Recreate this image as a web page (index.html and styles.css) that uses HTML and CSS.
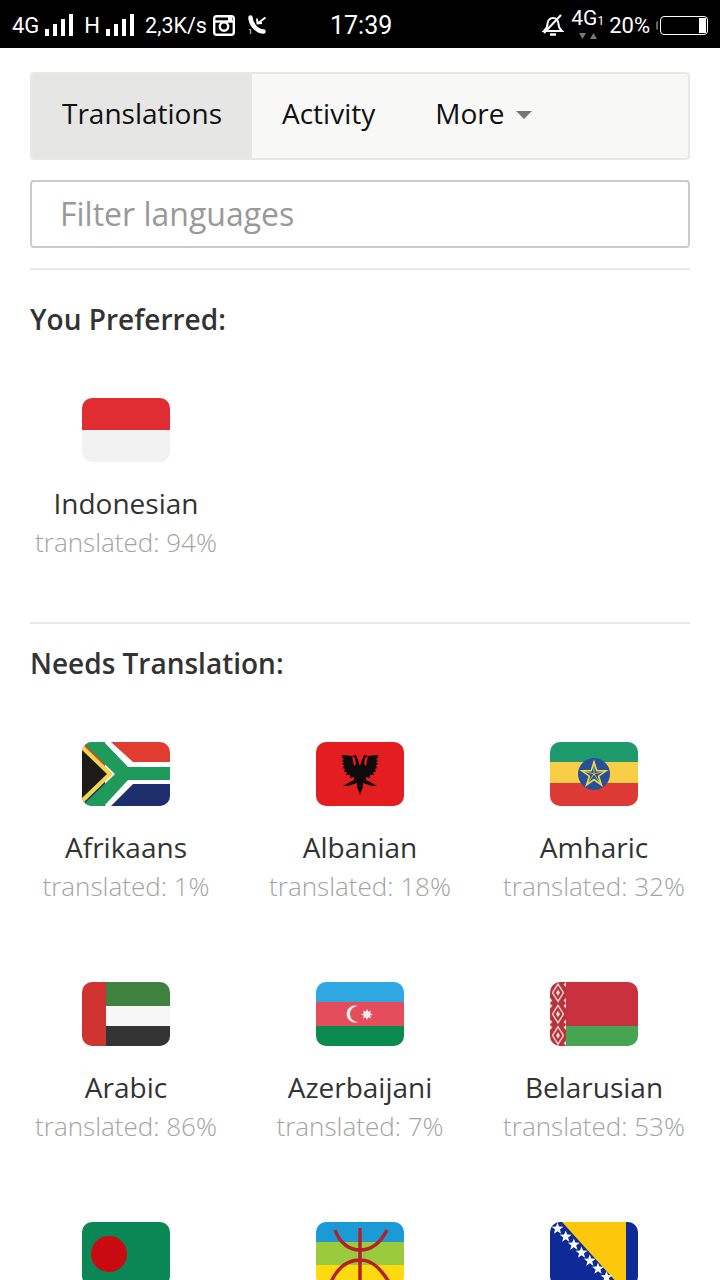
FILE: index.html
```html
<!DOCTYPE html>
<html lang="en">
<head>
    <meta charset="UTF-8">
    <meta name="viewport" content="width=device-width, initial-scale=1.0">
    <title>Translations</title>
    <link rel="stylesheet" href="styles.css">
</head>
<body>
    <header class="statusbar">
        <div class="status-left">
            <span class="net">4G</span>
            <svg class="bars" width="28" height="22" viewBox="0 0 28 22"><path d="M0 15h4v7H0zM8 10h4v12H8zM16 5h4v17h-4zM24 0h4v22h-4z" fill="#fff"/></svg>
            <span class="net net-h">H</span>
            <svg class="bars bars-h" width="28" height="22" viewBox="0 0 28 22"><path d="M0 15h4v7H0zM8 10h4v12H8zM16 5h4v17h-4zM24 0h4v22h-4z" fill="#fff"/></svg>
            <span class="speed">2,3K/s</span>
            <svg class="insta" width="22" height="21" viewBox="0 0 22 21"><rect x="1.200" y="1.200" width="19.600" height="18.600" rx="2.500" fill="none" stroke="#fff" stroke-width="2.400"/><path d="M1 6.500h20" stroke="#fff" stroke-width="2.400"/><circle cx="11" cy="11.500" r="4.200" fill="#000" stroke="#fff" stroke-width="2.400"/><rect x="15" y="2" width="4" height="4" fill="#fff"/></svg>
            <div class="call">
                <svg width="20" height="20" viewBox="0 0 20 20"><path d="M3.500 2.500C3.500 9 10 16.500 16.500 16.500" fill="none" stroke="#fff" stroke-width="4.500" stroke-linecap="round"/><path d="M10.500 8.500L18.500 2.500M10 3.500l.5 5 4.500-.5" fill="none" stroke="#fff" stroke-width="2"/></svg>
                <span class="call-sim">1</span>
            </div>
        </div>
        <div class="clock">17:39</div>
        <div class="status-right">
            <svg class="bell" width="22" height="22" viewBox="0 0 22 22"><path d="M2 17c2.500-2 3.500-4 3.500-7 0-3.500 2.500-6 5.500-6s5.500 2.500 5.500 6c0 3 1 5 3.500 7z" fill="none" stroke="#fff" stroke-width="2"/><path d="M8 20.500h6" stroke="#fff" stroke-width="2.500"/><path d="M2 19L19 1" stroke="#fff" stroke-width="2"/></svg>
            <div class="sim">
                <span class="sim-text">4G<small>1</small></span>
                <svg class="sim-arrows" width="18" height="7" viewBox="0 0 18 7"><path d="M0 0h7L3.500 6zM11 6l3.500-6L18 6z" fill="#777"/></svg>
            </div>
            <span class="percent">20%</span>
            <div class="battery"><div class="battery-level"></div></div>
        </div>
    </header>

    <main class="page">
        <nav class="tabs">
            <a class="tab active" href="#">Translations</a>
            <a class="tab" href="#">Activity</a>
            <a class="tab" href="#">More <span class="caret"></span></a>
        </nav>

        <input class="filter" type="text" placeholder="Filter languages">

        <hr class="rule rule-top">
        <h2 class="group-title">You Preferred:</h2>
        <section class="languages preferred">
            <article class="language">
                <svg class="flag" viewBox="0 0 88 64"><rect width="88" height="32" fill="#e02d33"/><rect y="32" width="88" height="32" fill="#f2f2f2"/></svg>
                <h3 class="name">Indonesian</h3>
                <p class="progress">translated: 94%</p>
            </article>
        </section>

        <hr class="rule">
        <h2 class="group-title group-second">Needs Translation:</h2>
        <section class="languages">
            <article class="language">
                <svg class="flag" viewBox="0 0 88 64">
                    <rect width="88" height="32" fill="#e03c31"/>
                    <rect y="32" width="88" height="32" fill="#1f2f6e"/>
                    <path d="M23 0h6L51 20h37v22H51L29 64h-6z" fill="#fff"/>
                    <path d="M0 2L31 32 0 62z" fill="#f2d64b"/>
                    <path d="M0 8L25 32 0 56z" fill="#1e1a18"/>
                    <path d="M0 0H22L46 25H88V38H46L22 64H0L33 32z" fill="#1f9a5b"/>
                </svg>
                <h3 class="name">Afrikaans</h3>
                <p class="progress">translated: 1%</p>
            </article>
            <article class="language">
                <svg class="flag" viewBox="0 0 88 64">
                    <rect width="88" height="64" fill="#e41e20"/>
                    <path id="eagle-half" d="M44 24l2-6 2-5 4 1-3 2-1 6 2 2 2-10 10-1 0 3-2 1 2 2-2 1 2 2-2 1 1 3-2 1 1 3-3 0 1 3-4 0 0 3-4-1 0 3 6 3 5 3-5 0-6-2-3-1 0 4-2 5-1 3z" fill="#0d0b0b"/>
                    <use href="#eagle-half" transform="translate(88) scale(-1,1)"/>
                </svg>
                <h3 class="name">Albanian</h3>
                <p class="progress">translated: 18%</p>
            </article>
            <article class="language">
                <svg class="flag" viewBox="0 0 88 64">
                    <rect width="88" height="20" fill="#1f9a6c"/>
                    <rect y="20" width="88" height="21" fill="#f7cf46"/>
                    <rect y="41" width="88" height="23" fill="#dd3a35"/>
                    <circle cx="44" cy="32" r="16" fill="#27509b"/>
                    <path d="M44 20l2.800 8.800h9.200l-7.400 5.400 2.800 8.800-7.400-5.400-7.400 5.400 2.800-8.800-7.400-5.400h9.200z" fill="none" stroke="#f2d64b" stroke-width="1.600"/>
                    <path d="M44 20v12M32 28.800L44 32M36.600 43L44 32M51.400 43L44 32M56 28.800L44 32" stroke="#f2d64b" stroke-width=".8"/>
                </svg>
                <h3 class="name">Amharic</h3>
                <p class="progress">translated: 32%</p>
            </article>
            <article class="language">
                <svg class="flag" viewBox="0 0 88 64">
                    <rect x="24" width="64" height="24" fill="#3f8240"/>
                    <rect x="24" y="24" width="64" height="20" fill="#f7f7f7"/>
                    <rect x="24" y="44" width="64" height="20" fill="#333"/>
                    <rect width="24" height="64" fill="#cf3431"/>
                </svg>
                <h3 class="name">Arabic</h3>
                <p class="progress">translated: 86%</p>
            </article>
            <article class="language">
                <svg class="flag" viewBox="0 0 88 64">
                    <rect width="88" height="21" fill="#2fa7e0"/>
                    <rect y="20" width="88" height="24" fill="#e44d5b"/>
                    <rect y="44" width="88" height="20" fill="#0b8a50"/>
                    <path d="M42 24a8.500 8.500 0 1 0 0 16a7 7 0 1 1 0-16z" fill="#f7f0f0"/>
                    <path d="M51 27l1.300 2.800 2.800-1.300-1 3 3 1-3 1 1 3-2.800-1.300-1.300 2.800-1.300-2.800-2.800 1.300 1-3-3-1 3-1-1-3 2.800 1.300z" fill="#f7f0f0"/>
                </svg>
                <h3 class="name">Azerbaijani</h3>
                <p class="progress">translated: 7%</p>
            </article>
            <article class="language">
                <svg class="flag" viewBox="0 0 88 64">
                    <defs>
                        <pattern id="ornament" width="16" height="21.400" patternUnits="userSpaceOnUse">
                            <rect width="16" height="21.400" fill="#b8323c"/>
                            <path d="M8 2l5.500 8.700L8 19.400 2.500 10.700z" fill="none" stroke="#f3e4e0" stroke-width="1.300"/>
                            <path d="M8 7.500l2 3.200-2 3.200-2-3.200z" fill="#f3e4e0"/>
                            <path d="M0 0l2.500 2.500L0 5zM16 0l-2.500 2.500L16 5zM0 16l2.500 2.500L0 21zM16 16l-2.500 2.500L16 21z" fill="#f3e4e0"/>
                        </pattern>
                    </defs>
                    <rect x="16" width="72" height="44" fill="#c9313f"/>
                    <rect x="16" y="44" width="72" height="20" fill="#45a552"/>
                    <rect width="16" height="64" fill="url(#ornament)"/>
                </svg>
                <h3 class="name">Belarusian</h3>
                <p class="progress">translated: 53%</p>
            </article>
            <article class="language">
                <svg class="flag" viewBox="0 0 88 64"><rect width="88" height="64" fill="#0a8754"/><circle cx="27" cy="32" r="18" fill="#c90a10"/></svg>
            </article>
            <article class="language">
                <svg class="flag" viewBox="0 0 88 64">
                    <rect width="88" height="21" fill="#1b9ad6"/>
                    <rect y="20" width="88" height="23" fill="#9bca3c"/>
                    <rect y="43" width="88" height="21" fill="#fdd90f"/>
                    <path d="M44 6v52M19 8C24 22 34 28 44 28S64 22 71 8M15 60C22 45 32 38 44 38S64 46 73 60" fill="none" stroke="#b3202a" stroke-width="3.500"/>
                </svg>
            </article>
            <article class="language">
                <svg class="flag" viewBox="0 0 88 64">
                    <rect width="88" height="64" fill="#0e2a96"/>
                    <path d="M12 0H76V64H70z" fill="#fdc70c"/>
                    <path id="bih-star" d="M7.500 0.500l1.500 4.100 4.400.2-3.500 2.700 1.200 4.200-3.600-2.400-3.600 2.400 1.200-4.200L1.600 4.800 6 4.600z" fill="#fff"/>
                    <use href="#bih-star" x="8.200" y="8"/>
                    <use href="#bih-star" x="16.300" y="16"/>
                    <use href="#bih-star" x="24" y="24"/>
                    <use href="#bih-star" x="32.300" y="32"/>
                    <use href="#bih-star" x="40.500" y="40"/>
                    <use href="#bih-star" x="49" y="48.500"/>
                </svg>
            </article>
        </section>
    </main>
</body>
</html>
```

FILE: styles.css
```css
* {
    box-sizing: border-box;
}

html,
body {
    height: 1280px;
    overflow: hidden;
}

body {
    margin: 0;
    background-color: white;
    font-family: "Open Sans", sans-serif;
    color: #333;
}

/* status bar */
.statusbar {
    display: flex;
    align-items: center;
    height: 48px;
    padding: 2px 12px 0;
    background-color: black;
    color: white;
    font-family: Roboto, sans-serif;
}

.status-left {
    display: flex;
    align-items: center;
    width: 318px;
}

.net {
    font-size: 22px;
}

.bars {
    margin-left: 6px;
}

.net-h {
    margin-left: 11px;
}

.speed {
    font-size: 21.500px;
    margin-left: 11px;
}

.insta {
    margin-left: 6px;
}

.call {
    position: relative;
    display: flex;
    margin-left: 12px;
}

.call-sim {
    position: absolute;
    left: 1px;
    bottom: -2px;
    font-size: 8px;
    line-height: 10px;
}

.clock {
    font-size: 25px;
}

.status-right {
    display: flex;
    align-items: center;
    margin-left: auto;
}

.bell {
    margin-right: 7px;
}

.sim {
    display: flex;
    flex-direction: column;
    align-items: center;
    margin-right: 5px;
    margin-top: -4px;
}

.sim-text {
    font-size: 21px;
    line-height: 24px;
}

.sim-text small {
    font-size: 12px;
}

.percent {
    font-size: 22px;
}

.battery {
    position: relative;
    display: flex;
    justify-content: flex-end;
    width: 48px;
    height: 19px;
    margin-left: 10px;
    padding: 1px;
    border: 1px solid white;
    border-radius: 4px;
}

.battery::before {
    content: "";
    position: absolute;
    left: -5px;
    top: 4px;
    width: 2px;
    height: 9px;
    background-color: #666;
    border-radius: 2px 0 0 2px;
}

.battery-level {
    width: 7px;
    background-color: white;
}

/* page */
.page {
    padding: 24px 30px 0;
}

.tabs {
    display: flex;
    height: 88px;
    background-color: #f8f8f7;
    border: 2px solid #e8e8e8;
    border-radius: 4px;
    overflow: hidden;
}

.tab {
    display: flex;
    align-items: center;
    padding: 0 30px 6px;
    font-size: 28px;
    color: #111;
    text-decoration: none;
}

.tab.active {
    background-color: #e6e6e5;
}

.caret {
    width: 0;
    height: 0;
    margin-left: 12px;
    margin-top: 3px;
    border-left: 8px solid transparent;
    border-right: 8px solid transparent;
    border-top: 8px solid #777;
}

.filter {
    display: block;
    width: 100%;
    height: 68px;
    margin-top: 20px;
    padding: 0 28px 2px;
    border: 2px solid #ccc;
    border-radius: 4px;
    font-family: "Open Sans", sans-serif;
    font-size: 32px;
}

.filter::placeholder {
    color: #999;
    opacity: 1;
}

.rule {
    height: 2px;
    margin: 0;
    border: none;
    background-color: #e9e9e9;
}

.rule-top {
    margin-top: 20px;
}

.group-title {
    margin: 29px 0 0;
    font-size: 28px;
    font-weight: 600;
    line-height: 40px;
    color: #333;
}

.group-second {
    margin-top: 19px;
}

.languages {
    display: grid;
    grid-template-columns: repeat(3, 234px);
    margin: 0 -21px;
}

.language {
    display: flex;
    flex-direction: column;
    align-items: center;
    height: 240px;
    padding-top: 59px;
}

.preferred {
    height: 283px;
    overflow: hidden;
}

.flag {
    display: block;
    flex-shrink: 0;
    width: 88px;
    height: 64px;
    border-radius: 10px;
}

.name {
    margin: 21px 0 0;
    font-size: 28px;
    font-weight: 400;
    line-height: 40px;
    color: #333;
}

.progress {
    margin: 0;
    font-size: 26px;
    font-weight: 300;
    line-height: 38px;
    color: #a3a3a3;
}
```
